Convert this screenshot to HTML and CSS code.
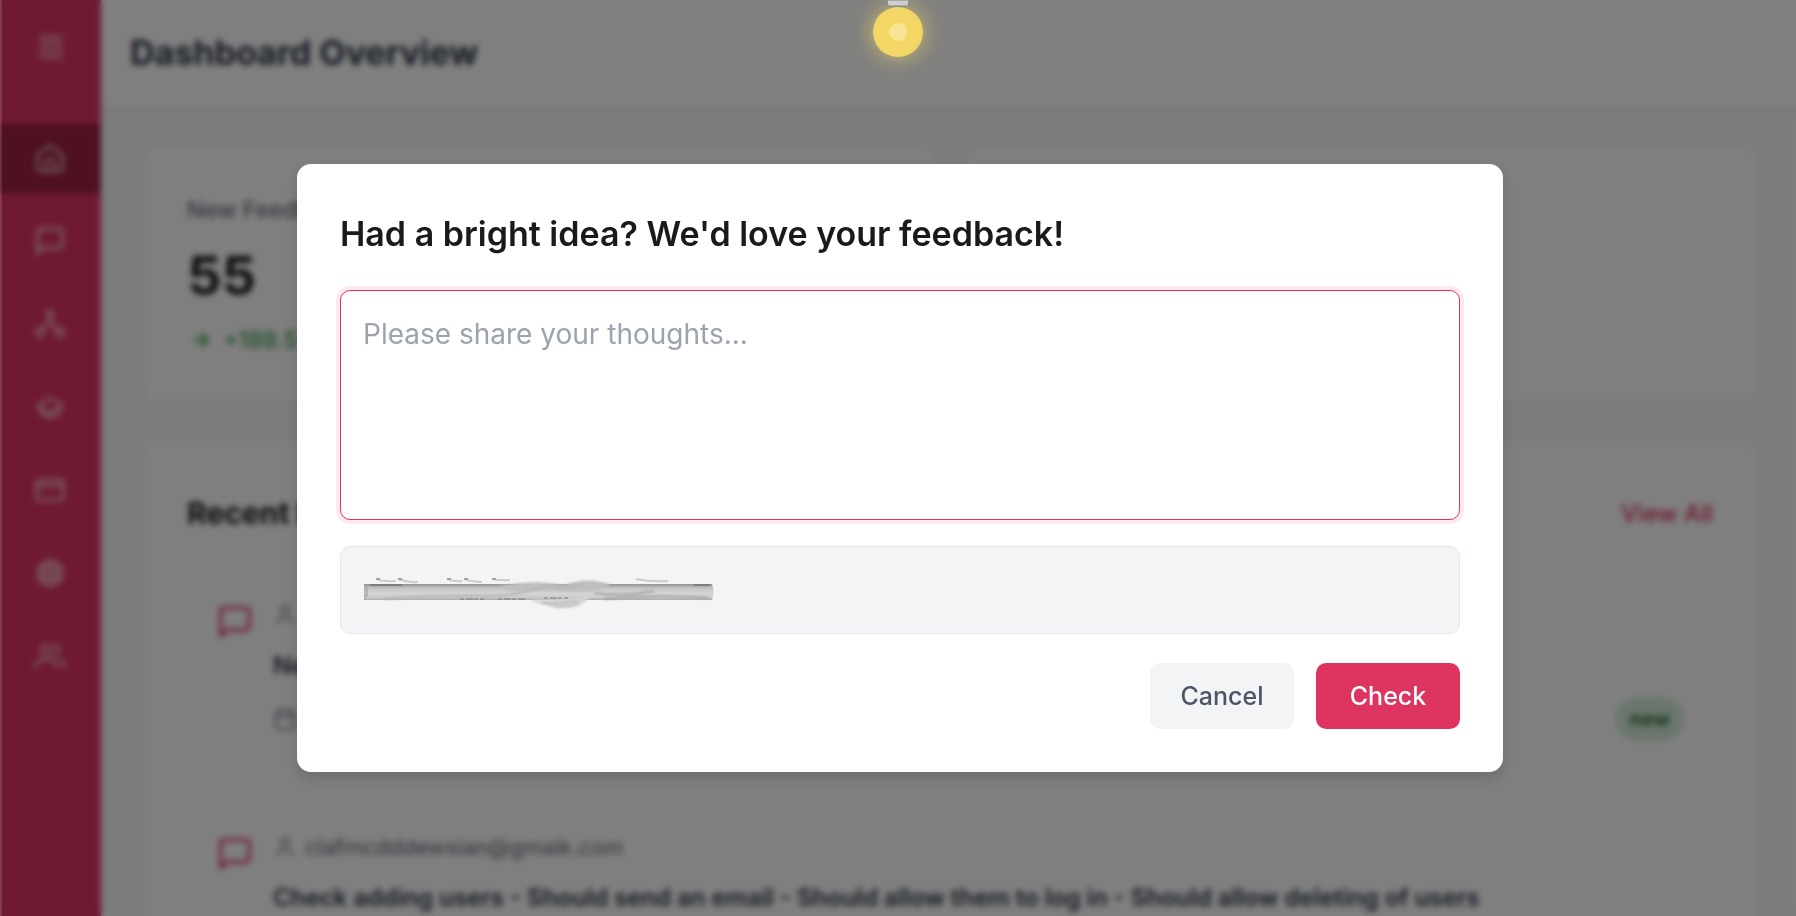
FILE: index.html
```html
<!DOCTYPE html>
<html lang="en">
<head>
<meta charset="utf-8">
<title>Dashboard Overview</title>
<link rel="stylesheet" href="styles.css">
</head>
<body>
<svg class="sprite" aria-hidden="true">
  <symbol id="i-message" viewBox="0 0 24 24"><path d="M21 15a2 2 0 0 1-2 2H7l-4 4V5a2 2 0 0 1 2-2h14a2 2 0 0 1 2 2z"/></symbol>
  <symbol id="i-user" viewBox="0 0 24 24"><path d="M19 21v-2a4 4 0 0 0-4-4H9a4 4 0 0 0-4 4v2"/><circle cx="12" cy="7" r="4"/></symbol>
  <symbol id="i-calendar" viewBox="0 0 24 24"><rect x="3" y="4" width="18" height="18" rx="2"/><path d="M16 2v4M8 2v4M3 10h18"/></symbol>
</svg>
<div class="app">
  <nav class="sidebar" aria-label="Main">
    <button class="toggle" type="button" aria-label="Menu"><svg class="icon" viewBox="0 0 24 24"><path d="M3.500 4h17M3.500 9h17M3.500 14.500h17M3.500 20h17"/></svg></button>
    <a class="nav-item active" href="#" aria-label="Home"><svg class="icon" viewBox="0 0 24 24"><path d="M2 10 12 1.500l10 8.500V19.500a3 3 0 0 1-3 3H5a3 3 0 0 1-3-3z"/><path d="M8.500 21v-5a3.500 3.500 0 0 1 7 0v5"/></svg></a>
    <a class="nav-item" href="#" aria-label="Feedback"><svg class="icon" viewBox="1 1 22 22"><use href="#i-message" width="24" height="24"/></svg></a>
    <a class="nav-item" href="#" aria-label="Workflow"><svg class="icon" viewBox="0 0 24 24"><circle cx="12" cy="4" r="2.500"/><path d="M12 7v4M12 11l-7 5M12 11l7 5"/><circle cx="4" cy="19" r="3"/><circle cx="20" cy="19" r="3"/></svg></a>
    <a class="nav-item" href="#" aria-label="Learning"><svg class="icon" viewBox="0 0 24 24"><path d="M12 5 1.500 11 12 17l10.500-6z"/><path d="M5 13.500V17c3.500 3.500 10.500 3.500 14 0v-3.500"/></svg></a>
    <a class="nav-item" href="#" aria-label="Billing"><svg class="icon" viewBox="0 0 24 24"><rect x="1.500" y="4" width="21" height="16" rx="2"/><path d="M2 8.500h20"/></svg></a>
    <a class="nav-item" href="#" aria-label="Settings"><svg class="icon" viewBox="0 0 24 24"><path d="M12 1.500 21 6.700v10.600L12 22.500 3 17.300V6.700z"/><path d="M12 5 18 8.500v7L12 19l-6-3.500v-7z"/><circle cx="12" cy="12" r="3"/></svg></a>
    <a class="nav-item" href="#" aria-label="Users"><svg class="icon" viewBox="0 0 24 24"><path d="M17 21v-2a4 4 0 0 0-4-4H5a4 4 0 0 0-4 4v2"/><circle cx="9" cy="7" r="4"/><path d="M23 21v-2a4 4 0 0 0-3-3.870M16 3.130a4 4 0 0 1 0 7.750"/></svg></a>
  </nav>
  <div class="page">
    <header class="topbar"><h1 class="page-title">Dashboard Overview</h1></header>
    <main class="content">
      <div class="stats">
        <section class="card">
          <p class="stat-label">New Feedback</p>
          <p class="stat-value">55</p>
          <p class="stat-delta"><svg class="arrow" viewBox="0 0 24 24"><path d="M4 12h16M13 5l7 7-7 7"/></svg>+189.5%</p>
        </section>
        <section class="card"></section>
      </div>
      <section class="card">
        <div class="card-head"><h2 class="card-title">Recent Feedback</h2><a class="view-all" href="#">View All</a></div>
        <ul class="feed">
          <li class="item">
            <svg class="item-icon"><use href="#i-message"/></svg>
            <div class="item-body">
              <p class="meta"><svg class="mini"><use href="#i-user"/></svg></p>
              <p class="item-title">New</p>
              <div class="item-foot"><svg class="mini"><use href="#i-calendar"/></svg><span class="badge">new</span></div>
            </div>
          </li>
          <li class="item">
            <svg class="item-icon"><use href="#i-message"/></svg>
            <div class="item-body">
              <p class="meta"><svg class="mini"><use href="#i-user"/></svg><span class="smeared">clafmcdddewsian@gmaik.com</span></p>
              <p class="item-title">Check adding users - Should send an email - Should allow them to log in - Should allow deleting of users</p>
            </div>
          </li>
        </ul>
      </section>
    </main>
  </div>
</div>

<div class="overlay">
  <svg class="bulb" viewBox="0 0 120 92" aria-hidden="true">
    <defs><radialGradient id="glow"><stop offset="0.400" stop-color="#f4d966" stop-opacity=".4"/><stop offset=".550" stop-color="#f4d966" stop-opacity=".17"/><stop offset=".750" stop-color="#f4d966" stop-opacity=".03"/><stop offset="1" stop-color="#f4d966" stop-opacity="0"/></radialGradient></defs>
    <circle cx="60" cy="32" r="55" fill="url(#glow)"/>
    <path d="M49.500-2h21v6a2 2 0 0 1-2 2h-17a2 2 0 0 1-2-2z" fill="#cdcdcd" stroke="#85868a"/>
    <path d="M50 0h20" stroke="#a9a9a9" stroke-width="2"/>
    <circle cx="60" cy="32" r="25" fill="#f2d666"/>
    <circle cx="60" cy="32" r="9" fill="#f8e594"/>
  </svg>
  <form class="modal" role="dialog" aria-labelledby="modal-title">
    <h2 class="modal-title" id="modal-title">Had a bright idea? We'd love your feedback!</h2>
    <textarea class="thoughts" aria-label="Your thoughts" placeholder="Please share your thoughts..."></textarea>
    <div class="email-row">
      <input class="email" type="email" aria-label="Email" readonly>
      <svg class="smudge" viewBox="0 0 356 36" aria-hidden="true">
        <defs>
          <linearGradient id="band" x2="0" y2="1"><stop offset="0" stop-color="#8f9192"/><stop offset=".250" stop-color="#c3c4c5"/><stop offset=".600" stop-color="#d4d5d6"/><stop offset=".850" stop-color="#c9cacb"/><stop offset="1" stop-color="#a9aaab"/></linearGradient>
          <filter id="soft" x="-10%" y="-40%" width="120%" height="180%"><feGaussianBlur stdDeviation="1.200"/></filter>
          <filter id="faint" x="-10%" y="-100%" width="120%" height="300%"><feGaussianBlur stdDeviation=".6"/></filter>
        </defs>
        <path d="M0 9h348q3 8 0 16H0z" fill="url(#band)"/>
        <g filter="url(#soft)" fill="none">
          <path d="M136 11q32-7 64-1 24-9 48 0l-24 7-84-2z" fill="#bebfc0"/>
          <path d="M165 25q30 0 64-5l-14 11q-10 3-28 1z" fill="#d2d3d4"/>
          <path d="M178 28q20 2 34-3M190 32q14 2 24-5" stroke="#acadae"/>
          <path d="M20 24q50-4 110-3 30-2 50-10 20 3 40-1" stroke="#b4b5b6" stroke-width="2"/>
          <path d="M240 24q50-5 104-1M230 18q30 4 60-2" stroke="#a5a6a7" stroke-width="2"/>
        </g>
        <g filter="url(#faint)">
          <path d="M12 4q8 3 20 2M34 4q10 4 20 3M83 4q8 3 15 2M100 4q8 3 18 3M128 4q8 2 18 1M272 4q14 3 32 2" stroke="#cbccce" stroke-width="2"/>
          <path d="M12 4h4M34 4h4M83 4h4M100 4h4M128 4h4" stroke="#a2a3a5" stroke-width="2"/>
          <path d="M96 24h24M134 24h28M180 23h24" stroke="#77787a" stroke-dasharray="4 2 7 1"/>
        </g>
        <path d="M1 9v16M3 12v10" stroke="#9c9d9e"/>
        <path d="M6 10h32M330 10h16" stroke="#5f6061"/>
      </svg>
    </div>
    <div class="actions">
      <button class="btn cancel" type="button">Cancel</button>
      <button class="btn check" type="submit">Check</button>
    </div>
  </form>
</div>
</body>
</html>
```
FILE: styles.css
```css
* { box-sizing: border-box; }

body {
  margin: 0;
  height: 100vh;
  overflow: hidden;
  font-family: Inter, "Liberation Sans", sans-serif;
  color: #1a1a1a;
}

h1, h2, p, ul { margin: 0; padding: 0; }
ul { list-style: none; }
a { text-decoration: none; }
.sprite { display: none; }
svg { fill: none; stroke-linecap: round; stroke-linejoin: round; flex: none; }

/* Page behind the dialog */
.app { display: flex; height: 100vh; overflow: hidden; background: #f7faf8; }

.sidebar {
  width: 101px;
  flex: none;
  display: flex;
  flex-direction: column;
  gap: 14px;
  padding-top: 1px;
  background: #de3460;
}
.toggle {
  display: flex;
  justify-content: center;
  padding: 31px 0;
  margin-bottom: 17px;
  border: 0;
  background: none;
}
.icon { width: 30px; height: 30px; stroke: rgb(255 255 255 / 75%); stroke-width: 2; }
.nav-item { height: 69px; display: flex; align-items: center; justify-content: center; padding: 0 2px 2px 0; }
.nav-item.active { background: #9e2040; }

.page { flex: 1; min-width: 0; }
.topbar {
  height: 107px;
  display: flex;
  align-items: center;
  padding: 0 29px 2px;
  background: #fff;
  box-shadow: 0 2px 5px rgb(0 0 0 / 8%);
}
.page-title { font-size: 34px; line-height: 44px; font-weight: 700; color: #2d3748; }

.content { display: flex; flex-direction: column; gap: 43px; padding: 42px 40px 42px 43px; }
.stats { display: grid; grid-template-columns: 1fr 1fr; gap: 34px; }
.card {
  padding: 44px 43px;
  border-radius: 12px;
  background: #fff;
  box-shadow: 0 2px 6px rgb(0 0 0 / 7%);
}
.stat-label { font-size: 23px; line-height: 34px; font-weight: 500; color: #6b7280; }
.stat-value { margin: 17px 0 15px; font-size: 54px; line-height: 64px; font-weight: 700; }
.stat-delta { display: flex; align-items: center; gap: 12px; padding-left: 4px; font-size: 23px; line-height: 34px; font-weight: 500; color: #38a145; }
.arrow { width: 20px; height: 20px; stroke: currentColor; stroke-width: 3; }

.card-head { display: flex; justify-content: space-between; align-items: center; margin-bottom: 60px; }
.card-title { font-size: 30px; line-height: 50px; font-weight: 700; }
.view-all { font-size: 24px; font-weight: 500; color: #de3460; }

.feed { display: flex; flex-direction: column; gap: 89px; }
.item { display: flex; gap: 19px; padding: 0 29px; }
.item-icon { width: 38px; height: 38px; margin-top: 5px; stroke: #de3460; stroke-width: 2; }
.item-body { flex: 1; min-width: 0; }
.meta { display: flex; align-items: center; gap: 8px; height: 34px; font-size: 22px; color: #5b6270; }
.mini { width: 24px; height: 24px; stroke: #7b8494; stroke-width: 2; }
.smeared { filter: blur(1px); }
.item-title { margin: 17px 0 14px; font-size: 24px; line-height: 34px; font-weight: 600; color: #2d3748; white-space: nowrap; }
.item-foot { display: flex; align-items: center; justify-content: space-between; }
.badge { padding: 5px 14px; border-radius: 22px; background: #d6eedb; color: #276738; font-size: 20px; line-height: 34px; font-weight: 600; }

/* Dialog layer */
.overlay {
  position: fixed;
  inset: 0;
  display: flex;
  align-items: center;
  justify-content: center;
  padding: 20px 0 0 2px;
  border-left: 2px solid rgb(255 255 255 / 14%);
  background: rgb(0 0 0 / 50%);
  backdrop-filter: blur(3px);
}
.bulb { position: absolute; top: 0; left: 50%; width: 120px; height: 92px; margin-left: -61px; }

.modal {
  width: min(1206px, 90%);
  padding: 43px;
  border-radius: 14px;
  background: #fff;
  box-shadow: 0 6px 14px rgb(0 0 0 / 15%);
}
.modal-title { margin-bottom: 29px; font-size: 34px; line-height: 54px; font-weight: 600; }
.thoughts, .email {
  display: block;
  width: 100%;
  padding: 21px 22px;
  border-radius: 10px;
  font: 400 28px/44px Inter, "Liberation Sans", sans-serif;
  outline: 0;
  resize: none;
}
.thoughts { height: 230px; border: 1px solid #de3460; box-shadow: 0 0 0 4px #fdeaef; }
.thoughts::placeholder { color: #9ca3af; opacity: 1; }
.email-row { position: relative; margin: 26px 0 29px; }
.email { height: 88px; border: 1px solid #e5e7eb; background: #f3f4f6; }
.smudge { position: absolute; left: 24px; top: 29px; width: 356px; height: 36px; stroke-linecap: butt; }

.actions { display: flex; justify-content: flex-end; gap: 22px; }
.btn {
  width: 144px;
  height: 66px;
  border: 0;
  border-radius: 10px;
  font: 500 25px/34px Inter, "Liberation Sans", sans-serif;
}
.cancel { background: #f3f4f6; color: #4b5563; }
.check { background: #de3460; color: #fff; }
```
